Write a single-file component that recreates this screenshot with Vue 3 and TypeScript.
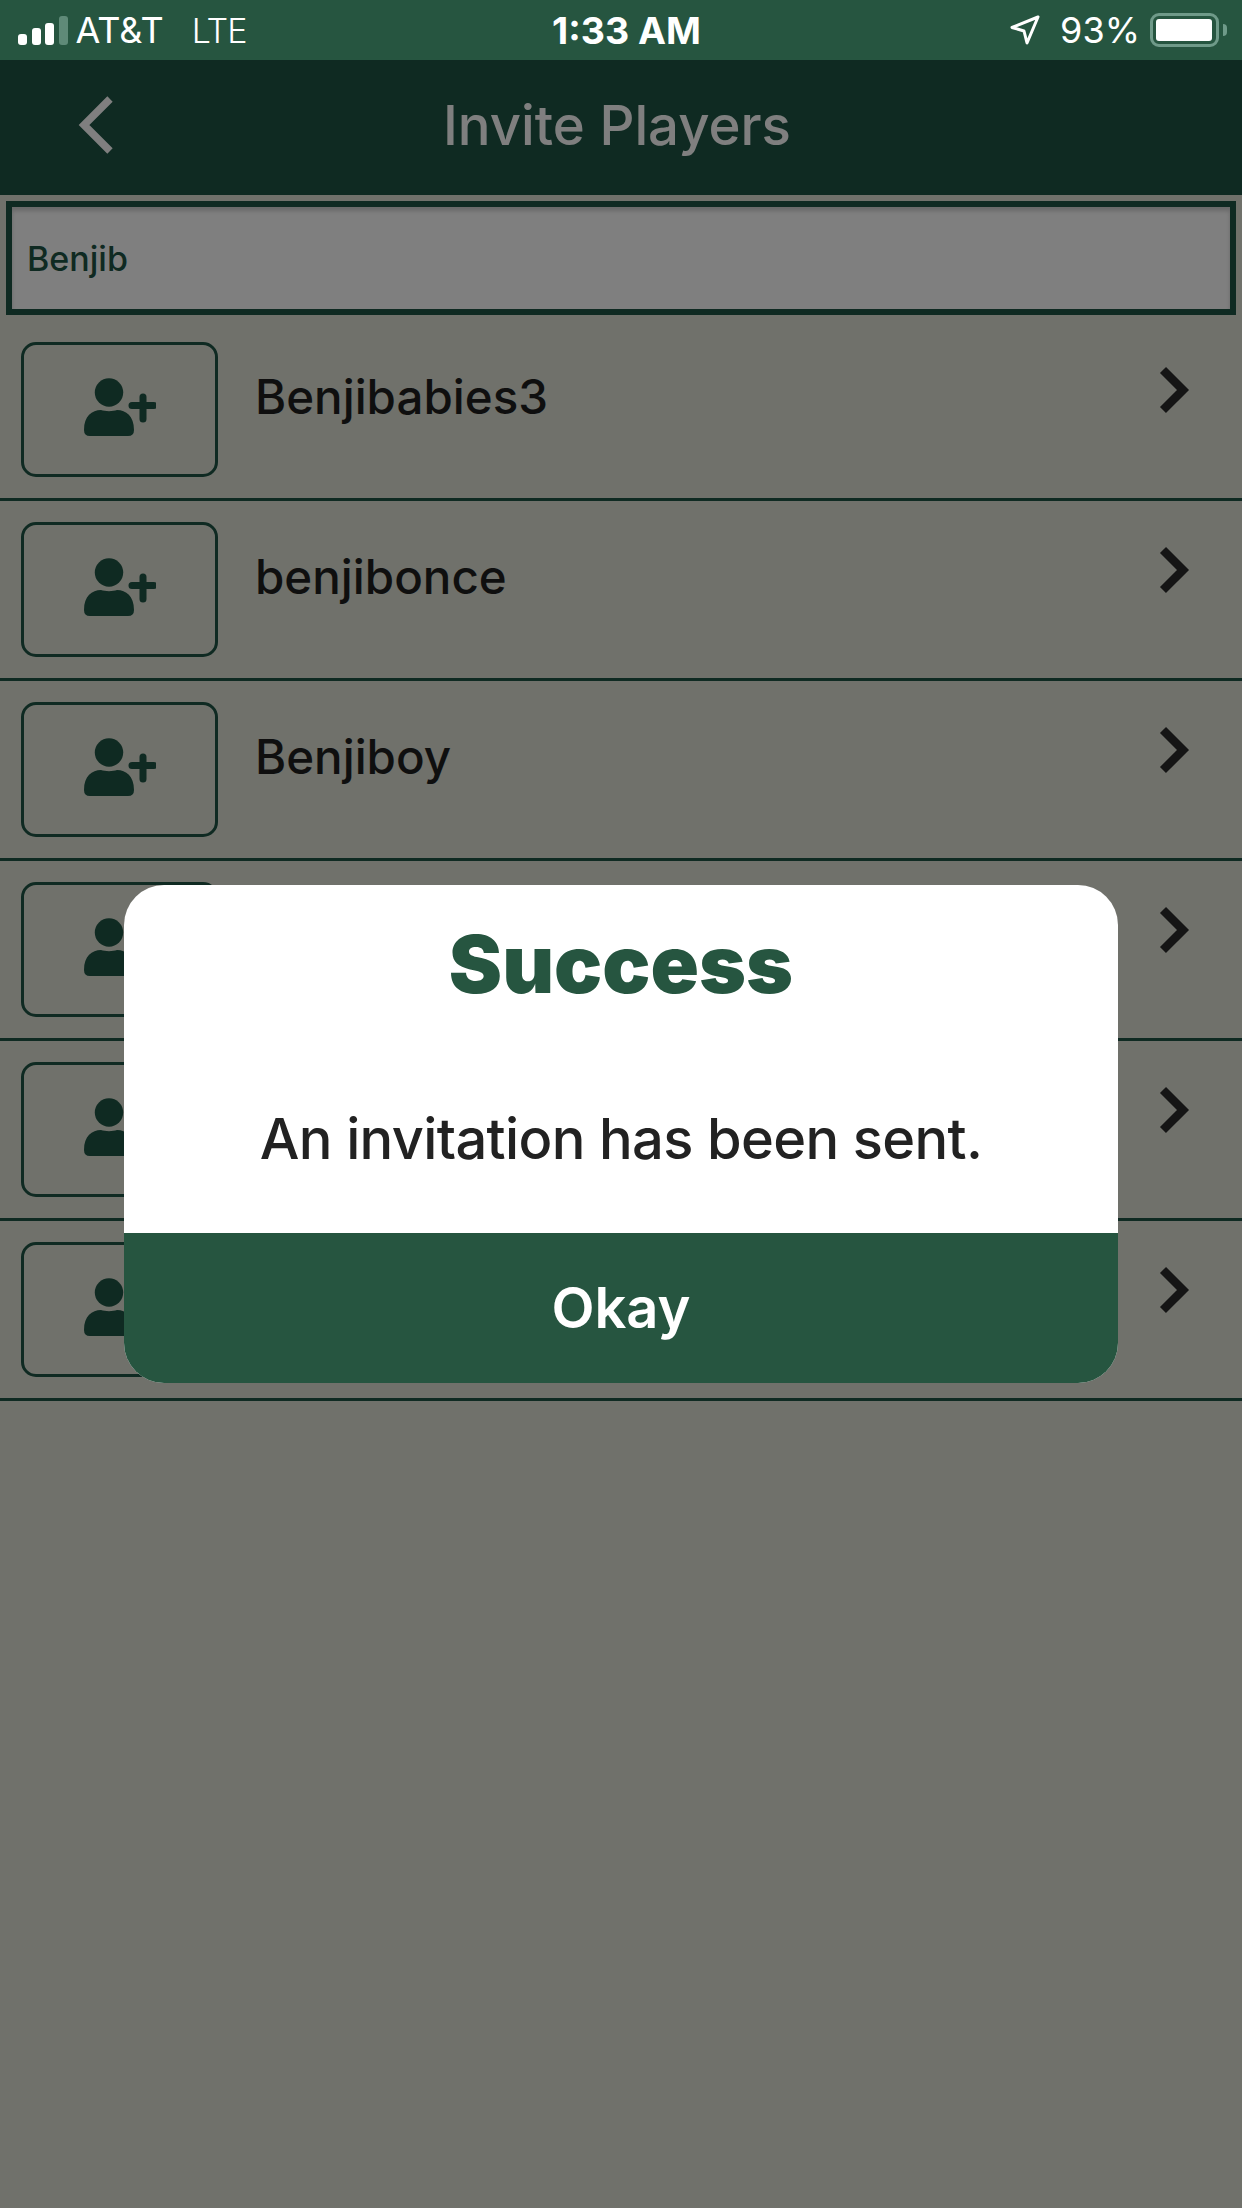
<script setup lang="ts">
const rows: string[] = ['Benjibabies3', 'benjibonce', 'Benjiboy', '', '', '']
</script>

<template>
  <div class="page">
    <header class="status">
      <div class="status-left">
        <div class="signal">
          <i class="b1"></i><i class="b2"></i><i class="b3"></i><i class="b4"></i>
        </div>
        <span class="carrier">AT&amp;T</span>
        <span class="lte">LTE</span>
      </div>
      <div class="time">1:33 AM</div>
      <div class="status-right">
        <svg class="loc" width="30" height="30" viewBox="0 0 30 30">
          <path d="M28 2 L2 12.500 L14 16 L17 28 Z" fill="none" stroke="#fff" stroke-width="3" stroke-linejoin="round" />
        </svg>
        <span class="pct">93%</span>
        <div class="battery"><div class="fill"></div></div>
        <div class="cap"></div>
      </div>
    </header>

    <nav class="nav">
      <svg class="back" width="36" height="58" viewBox="0 0 36 58">
        <path d="M33 3 L7 29 L33 55" fill="none" stroke="#fff" stroke-width="7.500" />
      </svg>
      <h1 class="title">Invite Players</h1>
    </nav>

    <main class="content">
      <div class="search">Benjib</div>
      <ul class="list">
        <li v-for="(name, i) in rows" :key="i" class="row">
          <div class="add">
            <svg class="add-icon" width="72" height="58" viewBox="0 0 72 58">
              <circle cx="25" cy="14.500" r="14.200" fill="#1e5444" />
              <path d="M0 52 C0 38 8 32 17 32 C21 33.500 29 33.500 33 32 C42 32 50 38 50 52 Q50 58 44 58 L6 58 Q0 58 0 52 Z" fill="#1e5444" />
              <path d="M59 19 V41 M48 27.500 H70" fill="none" stroke="#1e5444" stroke-width="7" stroke-linecap="round" />
            </svg>
          </div>
          <span class="name">{{ name }}</span>
          <svg class="chev" width="36" height="48" viewBox="0 0 36 48">
            <path d="M8 4 L28 24 L8 44" fill="none" stroke="#2a2a2a" stroke-width="8.500" />
          </svg>
        </li>
      </ul>
    </main>

    <div class="overlay">
      <section class="modal">
        <div class="modal-body">
          <h2 class="modal-title">Success</h2>
          <p class="modal-text">An invitation has been sent.</p>
        </div>
        <button class="okay" type="button">Okay</button>
      </section>
    </div>
  </div>
</template>

<style>
html, body { margin: 0; padding: 0; }
</style>

<style scoped>
* { box-sizing: border-box; }
.page {
  position: relative;
  width: 1242px;
  height: 2208px;
  overflow: hidden;
  background: #e0e2d6;
  font-family: Inter, "Liberation Sans", sans-serif;
}
.status {
  position: relative;
  height: 60px;
  background: #265540;
  color: #fff;
  display: flex;
  align-items: center;
  justify-content: space-between;
  padding: 0 15px 0 18px;
  font-size: 36px;
}
.status-left, .status-right { display: flex; align-items: center; }
.signal { display: flex; align-items: flex-end; gap: 4.500px; height: 29px; }
.signal i { display: block; width: 9px; background: #fff; border-radius: 3px; }
.b1 { height: 11px; }
.b2 { height: 17px; }
.b3 { height: 22px; }
.b4 { height: 29px; background: #5f8a78 !important; }
.carrier { margin-left: 8px; font-weight: 400; }
.lte { margin-left: 28px; font-weight: 300; font-size: 34px; letter-spacing: -1px; }
.time {
  position: absolute;
  left: 552px;
  top: 11px;
  line-height: 40px;
  font-weight: 700;
  font-size: 37.500px;
}
.loc { margin-right: 20px; }
.pct { margin-right: 10px; font-weight: 400; }
.battery {
  width: 69px;
  height: 34px;
  border: 3px solid #6f9a89;
  border-radius: 9px;
  padding: 3px;
}
.fill { width: 56px; height: 22px; background: #fff; border-radius: 3px; }
.cap {
  width: 4px;
  height: 12px;
  margin-left: 4px;
  background: #6f9a89;
  border-radius: 0 4px 4px 0;
}
.nav {
  position: relative;
  height: 135px;
  background: #1e5444;
  display: flex;
  align-items: center;
  justify-content: center;
  color: #fff;
  padding-bottom: 6px;
}
.back { position: absolute; left: 77px; top: 36px; }
.title {
  margin: 0 8px 0 0;
  font-size: 54.500px;
  font-weight: 500;
  line-height: 64px;
}
.content { padding-top: 6px; }
.search {
  height: 114px;
  margin: 0 6px;
  border: 6px solid #1e5444;
  background: #fff;
  box-shadow: inset 0 4px 4px rgba(0, 0, 0, 0.18);
  color: #1e5444;
  font-size: 34px;
  font-weight: 500;
  display: flex;
  align-items: center;
  padding-left: 15px;
}
.list { list-style: none; margin: 6px 0 0; padding: 0; }
.row {
  height: 180px;
  border-bottom: 3px solid #1e5444;
  padding: 21px 32px 0 21px;
  display: flex;
  align-items: flex-start;
}
.add {
  width: 197px;
  height: 135px;
  border: 3px solid #1e5444;
  border-radius: 15px;
  display: flex;
  align-items: center;
  justify-content: center;
}
.add-icon { margin: -5px 0 0 1px; }
.name {
  margin-left: 37px;
  margin-top: 27px;
  flex: 1;
  font-size: 47.500px;
  font-weight: 500;
  line-height: 56px;
  color: #1f1f1f;
}
.chev { margin-top: 24px; margin-right: 19px; }
.overlay {
  position: absolute;
  left: 0;
  right: 0;
  top: 60px;
  bottom: 0;
  background: rgba(0, 0, 0, 0.5);
}
.modal {
  position: absolute;
  left: 124px;
  top: 825px;
  width: 994px;
  height: 498px;
  border-radius: 40px;
  overflow: hidden;
  background: #fff;
  display: flex;
  flex-direction: column;
}
.modal-body { flex: 1; text-align: center; }
.modal-title {
  margin: 32px 0 0;
  font-size: 80px;
  font-weight: 900;
  line-height: 94px;
  color: #265540;
}
.modal-text {
  margin: 94px 0 0;
  font-size: 56px;
  font-weight: 500;
  letter-spacing: -0.650px;
  line-height: 68px;
  color: #222;
}
.okay {
  height: 150px;
  border: 0;
  background: #265540;
  color: #fff;
  font-family: inherit;
  font-size: 56px;
  font-weight: 600;
  padding: 0;
}
</style>
